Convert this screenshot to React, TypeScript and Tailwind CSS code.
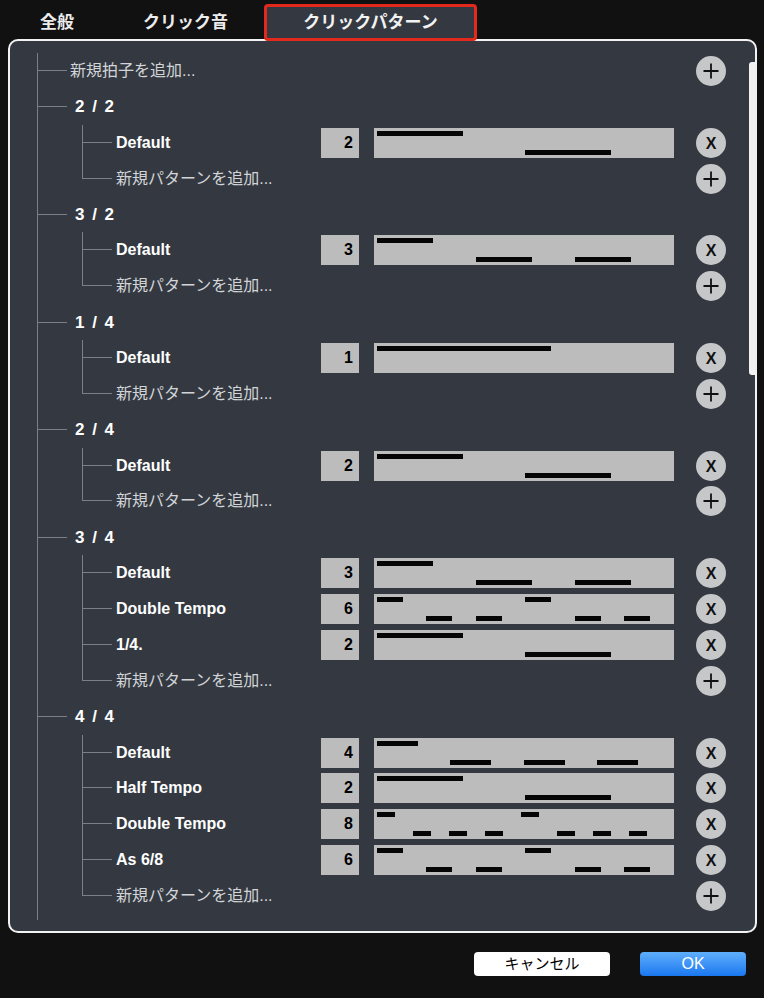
import React from "react";

const FONT = "font-[family-name:'Liberation_Sans','Noto_Sans_CJK_JP',sans-serif]";
const ROW = "h-[35.875px]";

type Seg = [number, number, boolean];
const PATTERNS: Record<number, Seg[]> = {
  1: [[3, 174, true]],
  2: [
    [3, 86, true],
    [151, 86, false],
  ],
  3: [
    [3, 56, true],
    [102, 56, false],
    [201, 56, false],
  ],
  4: [
    [3, 41, true],
    [76, 41, false],
    [150, 41, false],
    [223, 41, false],
  ],
  6: [
    [3, 26, true],
    [52, 26, false],
    [102, 26, false],
    [151, 26, true],
    [201, 26, false],
    [250, 26, false],
  ],
  8: [
    [3, 18, true],
    [39, 18, false],
    [75, 18, false],
    [111, 18, false],
    [147, 18, true],
    [183, 18, false],
    [219, 18, false],
    [255, 18, false],
  ],
};

type Pat = { name: string; n: number };
const GROUPS: { sig: string; pats: Pat[] }[] = [
  { sig: "2 / 2", pats: [{ name: "Default", n: 2 }] },
  { sig: "3 / 2", pats: [{ name: "Default", n: 3 }] },
  { sig: "1 / 4", pats: [{ name: "Default", n: 1 }] },
  { sig: "2 / 4", pats: [{ name: "Default", n: 2 }] },
  {
    sig: "3 / 4",
    pats: [
      { name: "Default", n: 3 },
      { name: "Double Tempo", n: 6 },
      { name: "1/4.", n: 2 },
    ],
  },
  {
    sig: "4 / 4",
    pats: [
      { name: "Default", n: 4 },
      { name: "Half Tempo", n: 2 },
      { name: "Double Tempo", n: 8 },
      { name: "As 6/8", n: 6 },
    ],
  },
];

function AddBtn() {
  return (
    <div className="w-[30px] h-[30px] rounded-full bg-[#c6c7c9] flex items-center justify-center shrink-0">
      <svg width="16" height="16" viewBox="0 0 16 16">
        <path d="M8 0.5V15.5M0.5 8H15.5" stroke="#111" strokeWidth="1.8" />
      </svg>
    </div>
  );
}

function DelBtn() {
  return (
    <div className="w-[30px] h-[30px] rounded-full bg-[#c6c7c9] flex items-center justify-center shrink-0">
      <span className="text-[16px] font-bold leading-none text-[#111] pt-[2px]">X</span>
    </div>
  );
}

function PatternBar({ n }: { n: number }) {
  const segs = PATTERNS[n];
  return (
    <svg width="300" height="30" className="block shrink-0 ml-[15px]">
      <rect x="0" y="0" width="300" height="30" fill="#bcbcbd" />
      {segs.map(([x, w, top], i) => (
        <rect key={i} x={x} y={top ? 3 : 22} width={w} height={5} fill="#050505" />
      ))}
    </svg>
  );
}

function Connector({ last }: { last: boolean }) {
  return (
    <div className="w-[30px] self-stretch flex flex-col shrink-0">
      <div className="h-1/2 border-l border-b border-[#7b7f86]" />
      <div className={last ? "h-1/2" : "h-1/2 border-l border-[#7b7f86]"} />
    </div>
  );
}

function ChildPatternRow({ p }: { p: Pat }) {
  return (
    <div className={`flex items-center ${ROW}`}>
      <Connector last={false} />
      <span className="ml-[4px] flex-1 text-[16px] font-bold text-white leading-none">{p.name}</span>
      <div className="w-[38px] h-[30px] bg-[#bcbcbd] flex items-center justify-end pr-[6px] text-[16px] font-bold text-black">
        {p.n}
      </div>
      <PatternBar n={p.n} />
      <div className="ml-[22px]">
        <DelBtn />
      </div>
    </div>
  );
}

function ChildAddRow() {
  return (
    <div className={`flex items-center ${ROW}`}>
      <Connector last={true} />
      <span className="ml-[4px] flex-1 text-[16px] text-[#d2d4d7] leading-none">新規パターンを追加...</span>
      <AddBtn />
    </div>
  );
}

export default function App() {
  return (
    <div className={`w-[764px] h-[998px] bg-[#111111] flex flex-col ${FONT}`}>
      {/* Tabs */}
      <div className="flex items-end h-[41px] relative z-10">
        <div className="ml-[40px] h-[37px] flex items-center text-[17px] font-bold text-[#ececec]">全般</div>
        <div className="ml-[69px] h-[37px] flex items-center text-[17px] font-bold text-[#ececec]">クリック音</div>
        <div className="ml-[36px] w-[213px] h-[37px] border-[3px] border-[#e3281c] rounded-[4px] bg-[#343941] flex items-center justify-center text-[17px] font-bold text-[#f2f2f2]">
          クリックパターン
        </div>
      </div>

      {/* Panel */}
      <div className="-mt-[2px] ml-[8px] w-[749px] h-[894px] border-2 border-[#f2f2f2] rounded-[10px] bg-[#343941] flex">
        <div className="ml-[27px] mt-[12px] self-start flex-1 border-l border-[#7b7f86] pb-[6px]">
          <div className={`flex items-center ${ROW}`}>
            <div className="w-[29px] h-px bg-[#7b7f86]" />
            <span className="ml-[3px] flex-1 text-[16px] text-[#d2d4d7] leading-none">新規拍子を追加...</span>
            <AddBtn />
          </div>
          {GROUPS.map((g) => (
            <div key={g.sig}>
              <div className={`flex items-center ${ROW}`}>
                <div className="w-[29px] h-px bg-[#7b7f86]" />
                <span className="ml-[8px] text-[17px] font-bold text-white leading-none [word-spacing:3px]">{g.sig}</span>
              </div>
              <div className="ml-[44px]">
                {g.pats.map((p, i) => (
                  <ChildPatternRow key={i} p={p} />
                ))}
                <ChildAddRow />
              </div>
            </div>
          ))}
        </div>
        <div className="ml-[23px] w-[6px] flex flex-col">
          <div className="mt-[21px] h-[313px] bg-[#f2f2f2] rounded-l-[3px]" />
        </div>
      </div>

      {/* Bottom buttons */}
      <div className="flex justify-end mt-[19px] pr-[18px] gap-[30px]">
        <div className="w-[136px] h-[24px] bg-white rounded-[4px] flex items-center justify-center text-[15px] text-black">
          キャンセル
        </div>
        <div className="w-[106px] h-[24px] rounded-[4px] bg-linear-to-b from-[#5eaefb] to-[#1877ef] text-white text-[16px] flex items-center justify-center">
          OK
        </div>
      </div>
    </div>
  );
}
